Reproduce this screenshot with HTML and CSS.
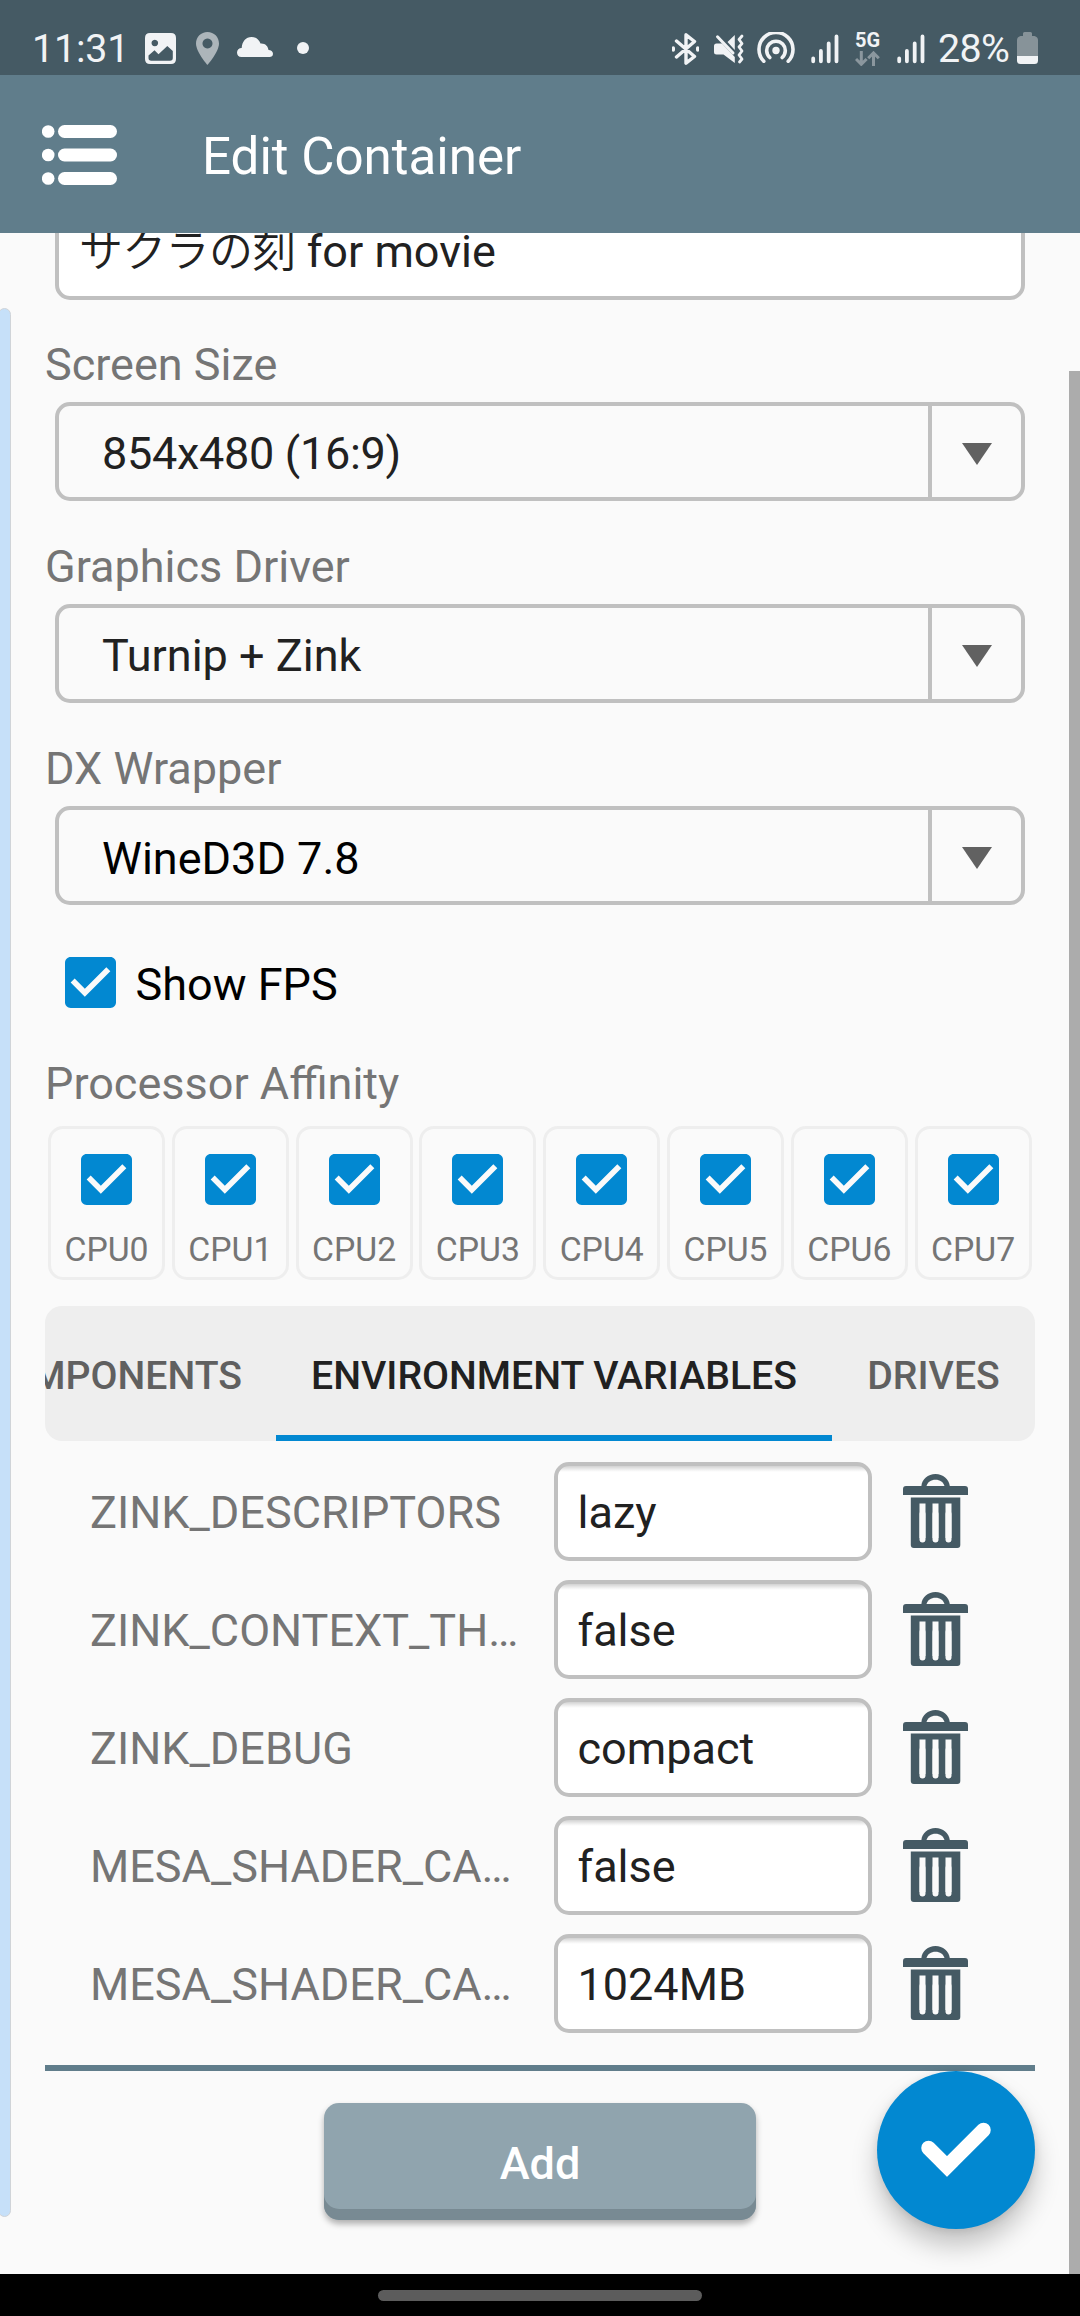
FILE: index.html
```html
<!DOCTYPE html>
<html lang="en">
<head>
<meta charset="utf-8">
<title>Edit Container</title>
<link rel="stylesheet" href="styles.css">
</head>
<body>
<svg class="defs" width="0" height="0">
  <symbol id="check-box" viewBox="3 3 18 18">
    <path fill="#0288d1" d="M19 3H5c-1.11 0-2 .9-2 2v14c0 1.1.89 2 2 2h14c1.11 0 2-.9 2-2V5c0-1.1-.89-2-2-2z"/>
    <path fill="#fafafa" d="M10 17l-5-5 1.41-1.41L10 14.17l7.59-7.59L19 8z"/>
  </symbol>
  <symbol id="trash" viewBox="0 0 65 74">
    <path fill="#455a64" fill-rule="evenodd" d="M18.4 12C19 5 25 0 32.5 0S46 5 46.800 12H62q3 0 3 3v6H0v-6q0-3 3-3zM23.500 12H41.500C40.500 8 37 5.700 32.500 5.700S24.500 8 23.500 12z"/>
    <path fill="#455a64" d="M7.800 23.500H57.300V71q0 3-3 3H10.800q-3 0-3-3z"/>
    <path stroke="#fafafa" stroke-width="6" d="M19.500 29.500V64M32.500 29.500V64M45.500 29.500V64"/>
    <path stroke="#fafafa" stroke-width="6" stroke-linecap="round" d="M19.500 40V65.500M32.500 40V65.500M45.500 40V65.500"/>
  </symbol>
  <symbol id="signal" viewBox="0 0 28 30">
    <path stroke="#f1f3f5" stroke-width="3.800" stroke-linecap="round" d="M2.200 24.500V27.300M9.900 17V27.300M17.700 9.500V27.300M25.500 2.500V27.300"/>
  </symbol>
</svg>

<div class="screen">
  <header>
    <div class="status-bar">
      <div class="status-left">
        <span class="clock">11:31</span>
        <svg class="icon-picture" viewBox="0 0 31 31"><path fill="#f1f3f5" fill-rule="evenodd" d="M5 0H26q5 0 5 5V26q0 5-5 5H5q-5 0-5-5V5q0-5 5-5zM9.800 6.700a3.300 3.300 0 1 0 .01 0zM3.500 22.500V25q0 2.800 2.800 2.800H25q2.800 0 2.800-2.800V18L22.300 13 13.500 21.300 9.500 17.300z"/></svg>
        <svg class="icon-pin" viewBox="0 0 23 33"><path fill="#acb5ba" fill-rule="evenodd" d="M11.500 0C5 0 0 5 0 11.500 0 20 11.500 33 11.500 33S23 20 23 11.500C23 5 18 0 11.500 0zm0 6.500a5 5 0 1 1-.01 0z"/></svg>
        <svg class="icon-cloud" viewBox="0 0 36 20"><path fill="#f1f3f5" d="M4.500 20C1.500 20 0 18 0 15.500S2 11 4.700 11C5 4.500 9 0 14.500 0c4.200 0 7.500 2.500 9 6.500 4.500-.5 7.500 2.500 8 6.500 2.500.2 4.500 1.500 4.500 3.700S34.500 20 32.500 20z"/></svg>
        <span class="more-dot"></span>
      </div>
      <div class="status-right">
        <svg class="icon-bt" viewBox="0 0 27 32" fill="none" stroke="#f1f3f5" stroke-width="3.400" stroke-linejoin="round" stroke-linecap="round"><path d="M4.500 8L22.500 23.500 14 30.200V1.800L22.500 8.500 4.500 24M1.300 15v2M25.700 15v2"/></svg>
        <svg class="icon-mute" viewBox="0 0 30 30"><path fill="#f1f3f5" d="M2.500 9.500H8L20.800 23V29L9.500 20.500H2.500Q0 20.500 0 18V12Q0 9.500 2.500 9.500zM20.800 1V16L13.500 8z"/><path stroke="#f1f3f5" stroke-width="3" stroke-linecap="round" d="M3.500 2.800L19 19"/><path fill="none" stroke="#f1f3f5" stroke-width="2.800" stroke-linejoin="round" stroke-linecap="round" d="M28 2L25 5.500 28 9.500 25 13 28 17 25 21 28 25 25.500 28"/></svg>
        <svg class="icon-hotspot" viewBox="0 0 38 31" fill="none" stroke="#f1f3f5" stroke-width="3.600" stroke-linecap="round"><circle cx="19" cy="18.500" r="3.700" fill="#f1f3f5" stroke="none"/><path d="M12.800 25.500A9.300 9.300 0 1 1 25.200 25.500M6.800 29.300A17 17 0 1 1 31.200 29.300"/></svg>
        <svg class="icon-signal"><use href="#signal"/></svg>
        <span class="network"><span class="network-type">5G</span>
          <svg viewBox="0 0 25 15" fill="none" stroke="#8b979e" stroke-width="3"><path d="M6.300 0V13M1 8L6.300 13.300 11.600 8M18.500 15V2M13.200 7.200L18.500 1.900 23.800 7.200"/></svg>
        </span>
        <svg class="icon-signal second"><use href="#signal"/></svg>
        <span class="battery-text">28%</span>
        <svg class="icon-battery" viewBox="0 0 21 32"><path fill="#879399" d="M7.500 0H13.500q1.500 0 1.500 1.500V4H17.500Q21 5 21 8V24.500H0V8Q0 5 3.500 4H6V1.500Q6 0 7.500 0z"/><path fill="#f1f3f5" d="M0 24H21V28.500Q21 32 17.500 32H3.500Q0 32 0 28.500z"/></svg>
      </div>
    </div>
    <div class="app-bar">
      <svg class="menu-icon" viewBox="0 0 75 60" fill="#fff"><circle cx="6.200" cy="6.500" r="6.300"/><circle cx="6.200" cy="30" r="6.300"/><circle cx="6.200" cy="53.500" r="6.300"/><rect x="16" y="0" width="59" height="13" rx="6.500"/><rect x="16" y="23.500" width="59" height="13" rx="6.500"/><rect x="16" y="47" width="59" height="13" rx="6.500"/></svg>
      <h1>Edit Container</h1>
    </div>
  </header>

  <main>
    <div class="drawer-edge"></div>
    <div class="scrollbar"></div>

    <div class="box name-box"><span class="kana">サクラの刻</span> for movie</div>

    <label class="field-label first">Screen Size</label>
    <div class="box select"><span class="value tight">854x480 (16:9)</span><span class="arrow"><svg viewBox="0 0 30 22"><path fill="#616161" d="M0 0H30L15 22z"/></svg></span></div>

    <label class="field-label">Graphics Driver</label>
    <div class="box select"><span class="value">Turnip + Zink</span><span class="arrow"><svg viewBox="0 0 30 22"><path fill="#616161" d="M0 0H30L15 22z"/></svg></span></div>

    <label class="field-label">DX Wrapper</label>
    <div class="box select"><span class="value black">WineD3D 7.8</span><span class="arrow"><svg viewBox="0 0 30 22"><path fill="#616161" d="M0 0H30L15 22z"/></svg></span></div>

    <div class="fps"><svg class="check"><use href="#check-box"/></svg><span>Show FPS</span></div>

    <label class="field-label affinity">Processor Affinity</label>
    <div class="cpus">
      <div class="cpu"><svg class="check"><use href="#check-box"/></svg><span>CPU0</span></div>
      <div class="cpu"><svg class="check"><use href="#check-box"/></svg><span>CPU1</span></div>
      <div class="cpu"><svg class="check"><use href="#check-box"/></svg><span>CPU2</span></div>
      <div class="cpu"><svg class="check"><use href="#check-box"/></svg><span>CPU3</span></div>
      <div class="cpu"><svg class="check"><use href="#check-box"/></svg><span>CPU4</span></div>
      <div class="cpu"><svg class="check"><use href="#check-box"/></svg><span>CPU5</span></div>
      <div class="cpu"><svg class="check"><use href="#check-box"/></svg><span>CPU6</span></div>
      <div class="cpu"><svg class="check"><use href="#check-box"/></svg><span>CPU7</span></div>
    </div>

    <nav class="tabs">
      <span class="tab scrolled">MPONENTS</span>
      <span class="tab active">ENVIRONMENT VARIABLES</span>
      <span class="tab drives">DRIVES</span>
    </nav>

    <div class="vars">
      <div class="var"><span class="var-name">ZINK_DESCRIPTORS</span><div class="box var-value">lazy</div><svg class="trash"><use href="#trash"/></svg></div>
      <div class="var"><span class="var-name">ZINK_CONTEXT_TH…</span><div class="box var-value">false</div><svg class="trash"><use href="#trash"/></svg></div>
      <div class="var"><span class="var-name">ZINK_DEBUG</span><div class="box var-value">compact</div><svg class="trash"><use href="#trash"/></svg></div>
      <div class="var"><span class="var-name">MESA_SHADER_CA…</span><div class="box var-value">false</div><svg class="trash"><use href="#trash"/></svg></div>
      <div class="var"><span class="var-name">MESA_SHADER_CA…</span><div class="box var-value">1024MB</div><svg class="trash"><use href="#trash"/></svg></div>
    </div>

    <div class="divider"></div>
    <div class="add-button">Add</div>

    <div class="fab"><svg viewBox="0 0 158 158"><path fill="none" stroke="#fff" stroke-width="14.500" stroke-linecap="round" d="M51.500 77L70 95.500 106.500 59"/><path fill="#fff" d="M59.500 95L70 105.500 80.500 95 70 85z"/></svg></div>
  </main>

  <footer><span class="home-pill"></span></footer>
</div>
</body>
</html>
```

FILE: styles.css
```css
* { box-sizing: border-box; }

body {
  margin: 0;
  background: #fafafa;
  font-family: Roboto, "Noto Sans CJK JP", sans-serif;
  font-size: 45px;
  line-height: 53px;
  color: #212121;
}

svg { display: block; flex: none; }
.defs { position: absolute; }

.screen {
  display: flex;
  flex-direction: column;
  width: 1080px;
  height: 2316px;
  overflow: hidden;
}

/* status bar */
.status-bar {
  display: flex;
  justify-content: space-between;
  height: 75px;
  padding: 32px 42px 0 32px;
  background: #455a64;
  color: #f1f3f5;
  font-size: 39.4px;
  line-height: 32px;
}
.status-left, .status-right { display: flex; align-items: flex-start; }
.clock { width: 113px; padding-top: 1px; letter-spacing: -0.2px; }
.icon-picture { width: 31px; height: 31px; margin-top: 1px; }
.icon-pin { width: 23px; height: 33px; margin-left: 20px; }
.icon-cloud { width: 36px; height: 20px; margin: 5px 0 0 17.5px; }
.more-dot { width: 12px; height: 12px; margin: 10px 0 0 24.5px; border-radius: 50%; background: #f1f3f5; }
.icon-bt { width: 27px; height: 32px; margin-top: 1px; }
.icon-mute { width: 30px; height: 30px; margin: 2px 0 0 15px; }
.icon-hotspot { width: 38px; height: 31px; margin-left: 13px; }
.icon-signal { width: 28px; height: 30px; margin: 2px 0 0 16px; }
.icon-signal.second { margin-left: 17px; }
.network { display: flex; flex-direction: column; width: 25px; margin-left: 16px; }
.network-type { height: 19px; font-size: 20px; line-height: 16px; font-weight: 700; }
.network svg { width: 25px; height: 15px; }
.battery-text { width: 80px; padding: 1px 0 0 13px; letter-spacing: -0.6px; white-space: nowrap; }
.icon-battery { width: 21px; height: 32px; margin-left: 12px; }

/* app bar */
.app-bar {
  display: flex;
  align-items: center;
  height: 158px;
  padding-left: 42px;
  background: #607d8b;
}
.menu-icon { width: 75px; height: 60px; margin-top: 2px; }
h1 {
  margin: 6px 0 0 85px;
  font-size: 51.1px;
  line-height: 60px;
  font-weight: 400;
  color: #fff;
}

/* form */
main {
  position: relative;
  flex: 1;
  padding: 0 45px;
  overflow: hidden;
}
.drawer-edge {
  position: absolute;
  left: -2px;
  top: 75px;
  width: 13px;
  height: 1909px;
  border: 1.5px solid #d0d4d8;
  border-radius: 6.5px;
  background: #c6e0f9;
}
.scrollbar {
  position: absolute;
  right: 0;
  top: 138px;
  bottom: 0;
  width: 11px;
  background: #acacac;
}
.box {
  height: 99px;
  border: 4px solid #c0c0c0;
  border-radius: 15px;
  white-space: nowrap;
}
.name-box {
  margin: -32px 10px 0;
  padding: 20px 0 0 20px;
  background: #fff;
}
.kana { font-size: 44px; font-weight: 350; letter-spacing: -0.7px; line-height: 50px; }
.field-label { display: block; margin: 39px 0 11px; color: #757575; }
.field-label.first { margin-top: 38px; }
.field-label.affinity { margin: 49px 0 16px; }
.select { display: flex; margin: 0 10px; }
.value { flex: 1; padding: 21px 0 0 43px; }
.tight { letter-spacing: -0.3px; }
.value.black { padding-top: 22px; color: #000; }
.arrow {
  display: flex;
  align-items: center;
  justify-content: center;
  width: 93px;
  border-left: 4px solid #c0c0c0;
}
.arrow svg { width: 30px; height: 22px; margin-top: 4px; }

.check { width: 51px; height: 51px; }
.fps { display: flex; gap: 20px; margin: 52px 0 0 19.5px; height: 51px; color: #000; }
.fps span { padding-top: 1px; }

.cpus { display: grid; grid-template-columns: repeat(8, 1fr); gap: 6.8px; padding: 0 3.4px 0 3px; }
.cpu {
  display: flex;
  flex-direction: column;
  align-items: center;
  gap: 25px;
  height: 154px;
  padding-top: 25px;
  border: 3px solid #eee;
  border-radius: 15px;
  font-size: 33.75px;
  line-height: 40px;
  color: #757575;
}

.tabs {
  display: flex;
  justify-content: flex-end;
  height: 135px;
  margin-top: 26px;
  border-radius: 17px;
  background: #eee;
  overflow: hidden;
}
.tab {
  flex: none;
  padding-top: 47px;
  border-bottom: 6px solid transparent;
  font-size: 39.2px;
  line-height: 46px;
  font-weight: 500;
  text-align: center;
  color: #606060;
}
.scrolled { padding-right: 34px; }
.drives { width: 203px; }
.active { width: 556px; color: #212121; border-color: #0288d1; }

.vars { display: flex; flex-direction: column; gap: 19px; margin-top: 20.5px; padding-left: 45px; }
.var { display: flex; height: 99px; }
.var-name { width: 463.5px; padding-top: 24px; color: #757575; white-space: nowrap; }
.var-value {
  width: 318.5px;
  padding: 20px 0 0 20px;
  background: linear-gradient(#d2d2d2, #f2f2f2 4px, #fff 6px);
}
.trash { width: 65px; height: 74px; margin: 12.5px 0 0 31px; }

.divider { height: 6px; margin-top: 32.5px; background: #607d8b; }
.add-button {
  width: 432px;
  height: 117px;
  margin: 32px 0 0 279px;
  padding-top: 34px;
  border-radius: 15px;
  background: #90a4ae;
  box-shadow: inset 0 -11px #788a93, 0 4px 6px rgba(0, 0, 0, .3);
  color: #fff;
  font-weight: 500;
  text-align: center;
}
.fab {
  position: absolute;
  right: 45px;
  top: 1838px;
  width: 158px;
  height: 158px;
  border-radius: 50%;
  background: #0288d1;
  box-shadow: 0 17px 26px rgba(0, 0, 0, .22), 0 2px 8px rgba(0, 0, 0, .1);
}

footer {
  display: flex;
  justify-content: center;
  height: 42px;
  padding-top: 16px;
  background: #000;
}
.home-pill { width: 324px; height: 11px; border-radius: 6px; background: #5c5c5c; }
```
